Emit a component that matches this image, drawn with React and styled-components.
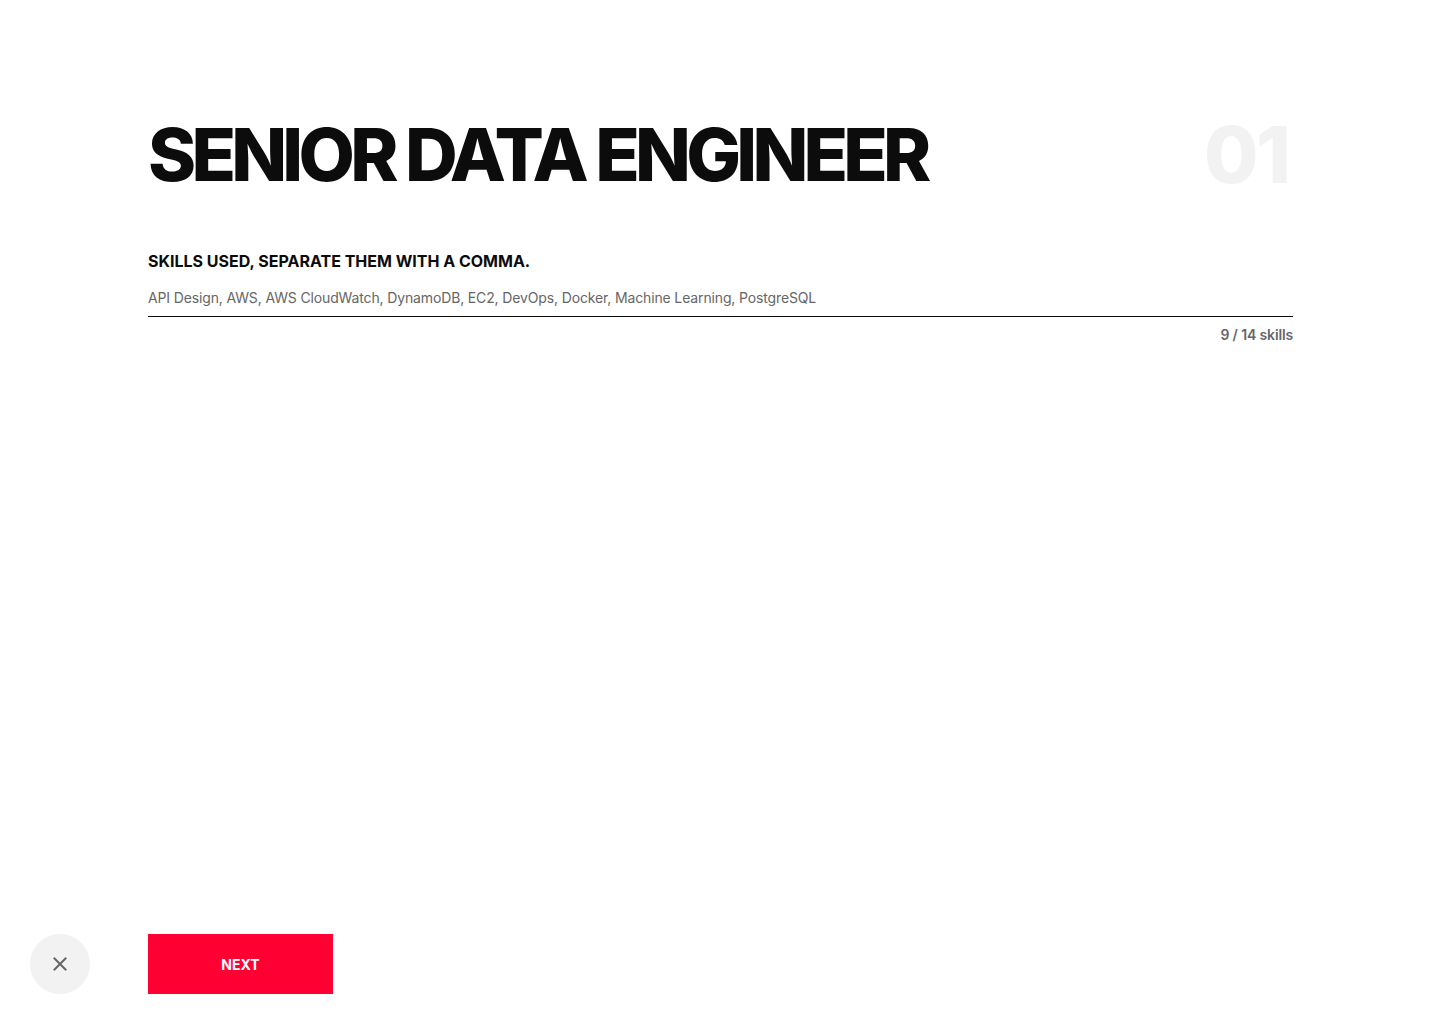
import React from 'react';
import styled, { createGlobalStyle } from 'styled-components';

const GlobalStyle = createGlobalStyle`
	* { box-sizing: border-box; }
	html, body, #root { height: 100%; }
	body {
		margin: 0;
		background: #ffffff;
		font-family: Inter, 'Noto Sans', sans-serif;
		color: #0c0c0c;
	}
`;

const Page = styled.div`
	height: 100vh;
	display: flex;
	flex-direction: column;
`;

const Main = styled.main`
	flex: 1;
	padding: 118px 147px 0 148px;
`;

const TitleRow = styled.div`
	display: flex;
	justify-content: space-between;
	align-items: flex-start;
`;

const Title = styled.h1`
	margin: 0;
	font-size: 73px;
	line-height: 73px;
	font-weight: 800;
	letter-spacing: -0.065em;
	color: #0c0c0c;
`;

const Step = styled.span`
	font-size: 79px;
	line-height: 73px;
	font-weight: 800;
	letter-spacing: -0.035em;
	color: #f2f2f2;
	padding-right: 5px;
`;

const Field = styled.div`
	margin-top: 61px;
	display: flex;
	flex-direction: column;
`;

const Label = styled.label`
	font-size: 16px;
	font-weight: 700;
	line-height: 18px;
	text-transform: uppercase;
	color: #0c0c0c;
`;

const Input = styled.input`
	margin-top: 18px;
	border: none;
	border-bottom: 1px solid #0c0c0c;
	padding: 0 0 8px;
	font-family: inherit;
	font-size: 14px;
	line-height: 20px;
	letter-spacing: -0.01em;
	color: #666666;
	outline: none;
	background: transparent;
`;

const Counter = styled.div`
	margin-top: 9px;
	align-self: flex-end;
	font-size: 14px;
	font-weight: 600;
	letter-spacing: -0.01em;
	color: #666666;
`;

const Footer = styled.footer`
	display: flex;
	align-items: center;
	gap: 58px;
	padding: 0 30px 30px;
`;

const CloseButton = styled.button`
	width: 60px;
	height: 60px;
	border-radius: 50%;
	border: none;
	background: #f2f2f2;
	display: flex;
	align-items: center;
	justify-content: center;
	cursor: pointer;
	padding: 0;
`;

const NextButton = styled.button`
	width: 185px;
	height: 60px;
	border: none;
	background: #ff0033;
	color: #ffffff;
	font-family: inherit;
	font-size: 14px;
	font-weight: 700;
	text-transform: uppercase;
	cursor: pointer;
`;

const skills = ['API Design', 'AWS', 'AWS CloudWatch', 'DynamoDB', 'EC2', 'DevOps', 'Docker', 'Machine Learning', 'PostgreSQL'];

const App = () => (
	<>
		<GlobalStyle />
		<Page>
			<Main>
				<TitleRow>
					<Title>SENIOR DATA ENGINEER</Title>
					<Step>01</Step>
				</TitleRow>
				<Field>
					<Label htmlFor='skills'>Skills used, separate them with a comma.</Label>
					<Input id='skills' defaultValue={skills.join(', ')} />
					<Counter>{skills.length} / 14 skills</Counter>
				</Field>
			</Main>
			<Footer>
				<CloseButton aria-label='Close'>
					<svg width='16' height='16' viewBox='0 0 16 16' fill='none' stroke='#666' strokeWidth='2' strokeLinecap='square'>
						<path d='M2.5 2.5 L13.5 13.5 M13.5 2.5 L2.5 13.5' />
					</svg>
				</CloseButton>
				<NextButton>Next</NextButton>
			</Footer>
		</Page>
	</>
);

export default App;
